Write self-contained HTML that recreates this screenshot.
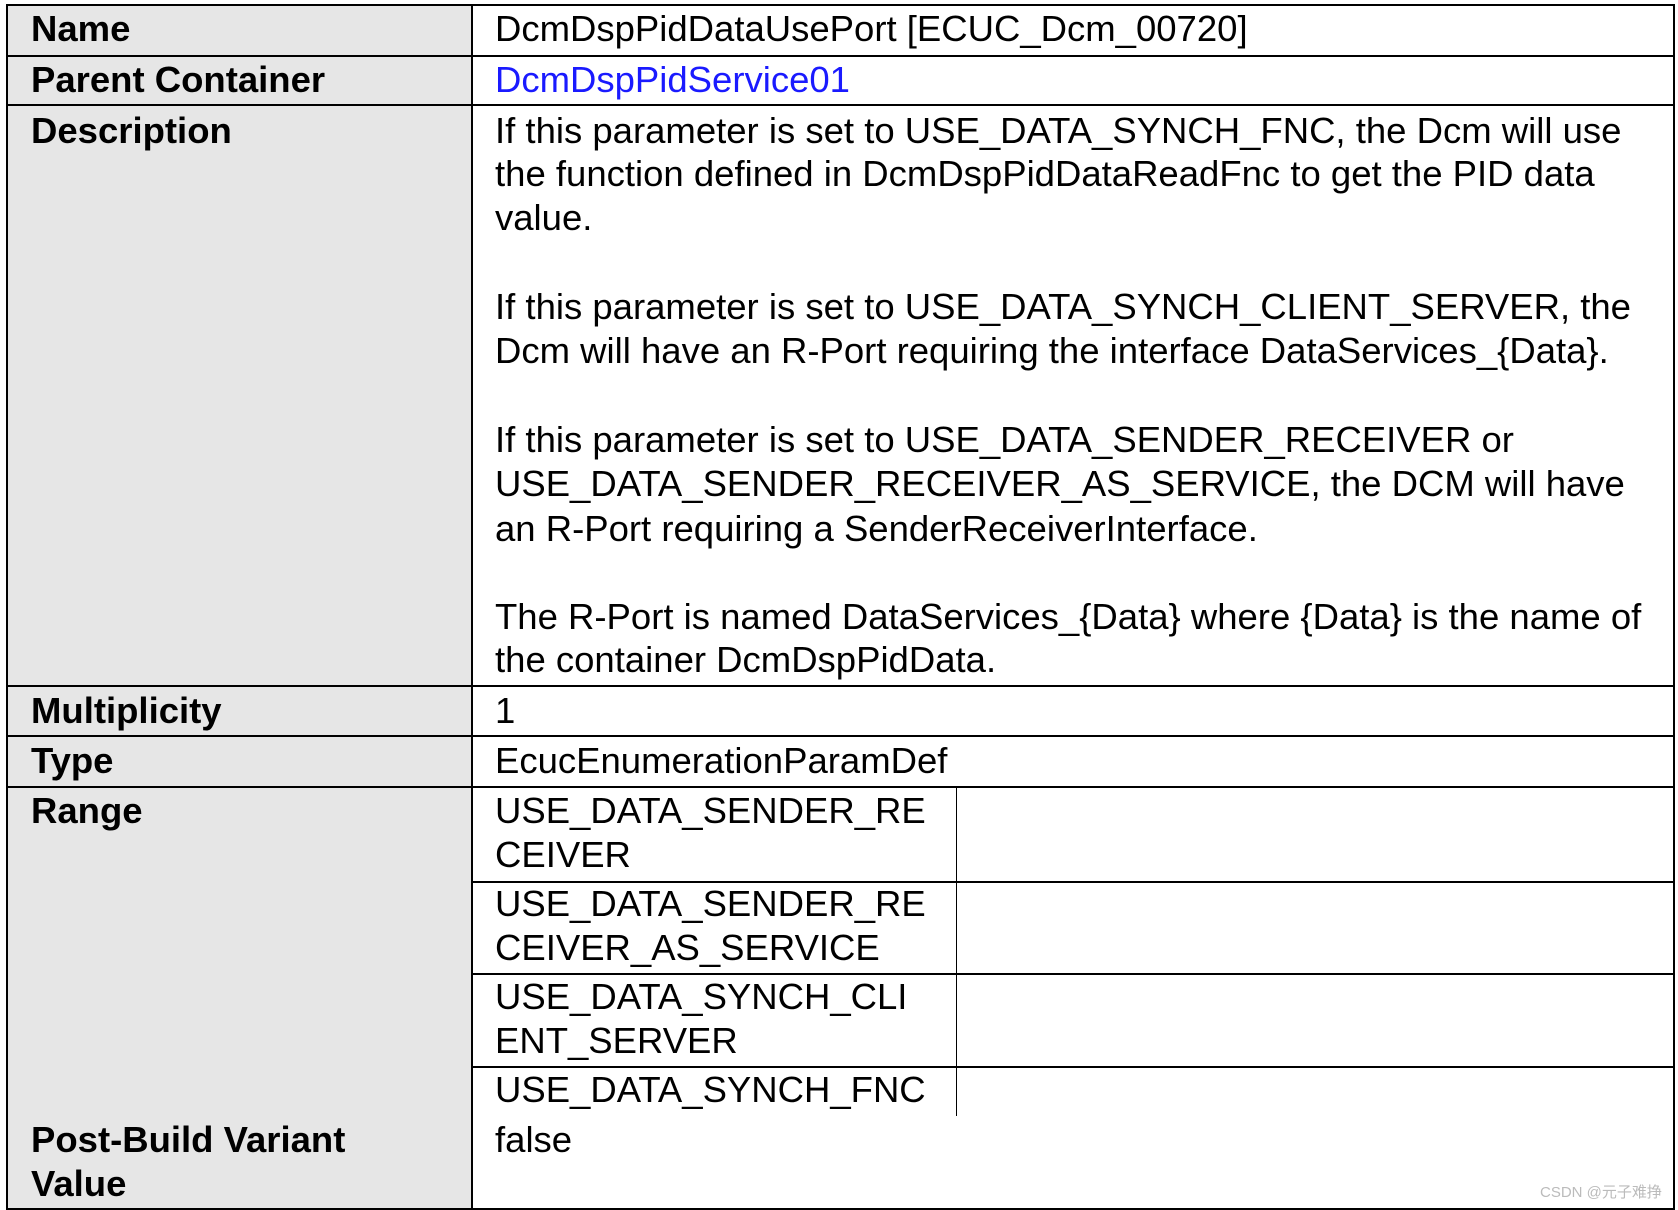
<!DOCTYPE html>
<html><head><meta charset="utf-8"><style>
html,body{margin:0;padding:0;background:#fff;}
body{width:1678px;height:1210px;position:relative;overflow:hidden;font-family:"Liberation Sans",Arial,sans-serif;font-size:36.5px;color:#000;}
.l{position:absolute;left:7px;width:465px;top:5px;height:1204px;background:#e6e6e6;}
.h{position:absolute;height:2px;background:#000;}
.v{position:absolute;width:2px;background:#000;}
.t{position:absolute;line-height:44px;height:44px;white-space:nowrap;}
.b{font-weight:bold;left:31px;}
.r{left:495px;}
</style></head><body>
<div class="l"></div>
<div class="h" style="left:7px;width:1668px;top:4px"></div>
<div class="h" style="left:7px;width:1668px;top:55px"></div>
<div class="h" style="left:7px;width:1668px;top:104px"></div>
<div class="h" style="left:7px;width:1668px;top:685px"></div>
<div class="h" style="left:7px;width:1668px;top:735px"></div>
<div class="h" style="left:7px;width:1668px;top:786px"></div>
<div class="h" style="left:472px;width:1203px;top:881px"></div>
<div class="h" style="left:472px;width:1203px;top:973px"></div>
<div class="h" style="left:472px;width:1203px;top:1066px"></div>
<div class="h" style="left:7px;width:1668px;top:1208px"></div>
<div class="v" style="left:6px;top:4px;height:1206px"></div>
<div class="v" style="left:471px;top:4px;height:1206px"></div>
<div class="v" style="left:1673px;top:4px;height:1206px"></div>
<div class="v" style="left:956px;top:786px;height:330px;width:1px"></div>

<div class="t b" style="top:7px">Name</div>
<div class="t b" style="top:58px">Parent Container</div>
<div class="t b" style="top:109px">Description</div>
<div class="t b" style="top:689px">Multiplicity</div>
<div class="t b" style="top:739px">Type</div>
<div class="t b" style="top:789px">Range</div>
<div class="t b" style="top:1118px">Post-Build Variant</div>
<div class="t b" style="top:1162px">Value</div>

<div class="t r" style="top:7px">DcmDspPidDataUsePort [ECUC_Dcm_00720]</div>
<div class="t r" style="top:58px;color:#1a1aff">DcmDspPidService01</div>
<div class="t r" style="top:109px">If this parameter is set to USE_DATA_SYNCH_FNC, the Dcm will use</div>
<div class="t r" style="top:152px">the function defined in DcmDspPidDataReadFnc to get the PID data</div>
<div class="t r" style="top:196px">value.</div>
<div class="t r" style="top:285px">If this parameter is set to USE_DATA_SYNCH_CLIENT_SERVER, the</div>
<div class="t r" style="top:329px">Dcm will have an R-Port requiring the interface DataServices_{Data}.</div>
<div class="t r" style="top:418px">If this parameter is set to USE_DATA_SENDER_RECEIVER or</div>
<div class="t r" style="top:462px">USE_DATA_SENDER_RECEIVER_AS_SERVICE, the DCM will have</div>
<div class="t r" style="top:507px">an R-Port requiring a SenderReceiverInterface.</div>
<div class="t r" style="top:595px">The R-Port is named DataServices_{Data} where {Data} is the name of</div>
<div class="t r" style="top:638px">the container DcmDspPidData.</div>
<div class="t r" style="top:689px">1</div>
<div class="t r" style="top:739px">EcucEnumerationParamDef</div>
<div class="t r" style="top:789px">USE_DATA_SENDER_RE</div>
<div class="t r" style="top:833px">CEIVER</div>
<div class="t r" style="top:882px">USE_DATA_SENDER_RE</div>
<div class="t r" style="top:926px">CEIVER_AS_SERVICE</div>
<div class="t r" style="top:975px">USE_DATA_SYNCH_CLI</div>
<div class="t r" style="top:1019px">ENT_SERVER</div>
<div class="t r" style="top:1068px">USE_DATA_SYNCH_FNC</div>
<div class="t r" style="top:1118px">false</div>
<div style="position:absolute;left:1540px;top:1181px;font-size:15px;color:#bbb;font-family:'Liberation Sans','Noto Sans CJK SC',sans-serif;">CSDN @元子难挣</div>
</body></html>
